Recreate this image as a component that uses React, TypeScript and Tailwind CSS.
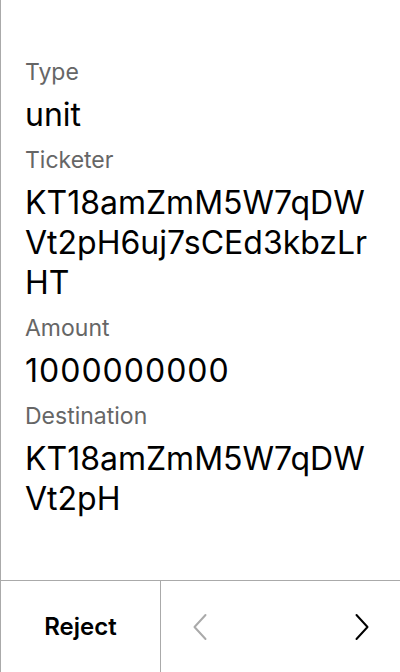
interface FieldProps {
  label: string;
  value: string;
  numeric?: boolean;
}

function Field({ label, value, numeric }: FieldProps) {
  return (
    <div className="mb-[11px]">
      <p className="text-[23px] leading-7 text-[#666666] mb-[9px]">{label}</p>
      <p className={`text-[32px] leading-10 text-black break-all ${numeric ? 'tracking-[1px]' : ''}`}>
        {value}
      </p>
    </div>
  );
}

function Chevron({ dir, className }: { dir: 'left' | 'right'; className: string }) {
  return (
    <svg width="16" height="28" viewBox="0 0 16 28" fill="none" className={className}>
      <polyline
        points={dir === 'left' ? '13.5,2 2.5,14 13.5,26' : '2.5,2 13.5,14 2.5,26'}
        stroke="currentColor"
        strokeWidth="2"
        strokeLinecap="round"
        strokeLinejoin="round"
      />
    </svg>
  );
}

export default function App() {
  return (
    <div
      className="h-[672px] w-[400px] flex flex-col bg-white border-l border-[#aaaaaa]"
      style={{ fontFamily: 'Inter, "Noto Sans", sans-serif' }}
    >
      {/* Operation details */}
      <div className="flex-1 px-6 pt-[58px]">
        <Field label="Type" value="unit" />
        <Field label="Ticketer" value="KT18amZmM5W7qDWVt2pH6uj7sCEd3kbzLrHT" />
        <Field label="Amount" value="1000000000" numeric />
        <Field label="Destination" value="KT18amZmM5W7qDWVt2pH" />
      </div>

      {/* Actions */}
      <div className="h-[92px] flex border-t border-[#aaaaaa]">
        <button className="w-40 flex items-center justify-center border-r border-[#aaaaaa] text-2xl font-semibold text-black">
          Reject
        </button>
        <div className="flex-1 flex items-center justify-between pl-[31px] pr-[30px]">
          <Chevron dir="left" className="text-[#aaaaaa]" />
          <Chevron dir="right" className="text-black" />
        </div>
      </div>
    </div>
  );
}
